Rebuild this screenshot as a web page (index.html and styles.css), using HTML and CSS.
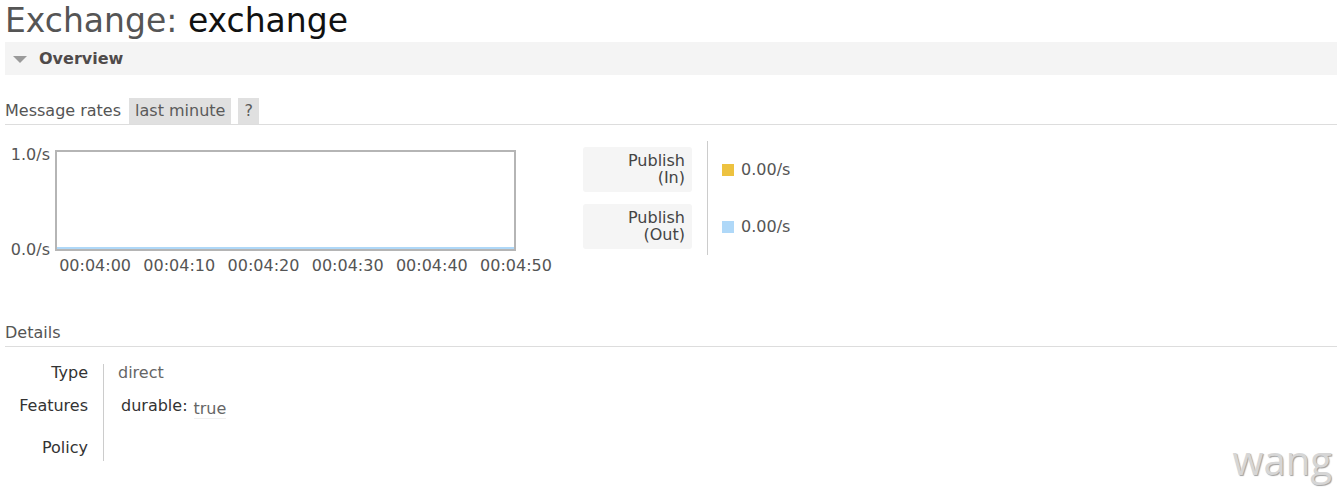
FILE: index.html
```html
<!DOCTYPE html>
<html>
<head>
<meta charset="utf-8">
<title>Exchange: exchange</title>
<link rel="stylesheet" href="styles.css">
</head>
<body>
<h1 class="page-title"><span class="title-kind">Exchange:</span> <b class="title-name">exchange</b></h1>

<div class="section">
  <h2 class="section-head"><span class="tri"></span>Overview</h2>
  <div class="section-body">
    <h3 class="sub-head">
      <span class="sub-title">Message rates</span>
      <span class="pill">last minute</span>
      <span class="pill">?</span>
    </h3>

    <div class="chart-row">
      <div class="chart">
        <span class="ytick ytick-top">1.0/s</span>
        <span class="ytick ytick-bottom">0.0/s</span>
        <div class="plot"><div class="series-line"></div></div>
        <div class="xaxis">
          <span class="xtick">00:04:00</span>
          <span class="xtick">00:04:10</span>
          <span class="xtick">00:04:20</span>
          <span class="xtick">00:04:30</span>
          <span class="xtick">00:04:40</span>
          <span class="xtick">00:04:50</span>
        </div>
      </div>

      <div class="legend">
        <div class="legend-labels">
          <div class="legend-label">Publish<br>(In)</div>
          <div class="legend-label">Publish<br>(Out)</div>
        </div>
        <div class="legend-values">
          <div class="legend-value"><span class="swatch swatch-in"></span>0.00/s</div>
          <div class="legend-value"><span class="swatch swatch-out"></span>0.00/s</div>
        </div>
      </div>
    </div>

    <h3 class="details-head">Details</h3>
    <div class="facts">
      <div class="fact-key row-type">Type</div>
      <div class="fact-val row-type">direct</div>
      <div class="fact-key row-features">Features</div>
      <div class="fact-val row-features"><span class="feat-key">durable:</span><span class="feat-val">true</span></div>
      <div class="fact-key row-policy">Policy</div>
      <div class="fact-val row-policy"></div>
    </div>
  </div>
</div>

<div class="watermark">wang</div>
</body>
</html>
```

FILE: styles.css
```css
html, body {
  margin: 0;
  padding: 0;
  background: #fff;
}

body {
  font-family: "DejaVu Sans", Verdana, sans-serif;
  font-size: 16px;
  color: #555;
  position: relative;
  height: 491px;
  overflow: hidden;
}

.page-title {
  margin: 0;
  padding-left: 5px;
  font-size: 33px;
  font-weight: normal;
  line-height: 42px;
  height: 42px;
}

.title-kind {
  color: #555;
}

.title-name {
  font-weight: normal;
  color: #111;
}

.section {
  margin-left: 5px;
}

.section-head {
  margin: 0;
  height: 33px;
  background: #f4f4f4;
  display: flex;
  align-items: center;
  padding-left: 8px;
  font-size: 16px;
  font-weight: bold;
  color: #4f4a4a;
}

.tri {
  width: 0;
  height: 0;
  border-left: 7px solid transparent;
  border-right: 7px solid transparent;
  border-top: 7px solid #9a9a9a;
  margin-right: 12px;
  margin-top: 2px;
}

.sub-head {
  margin: 23px 0 0 0;
  display: flex;
  height: 26px;
  border-bottom: 1px solid #ddd;
  font-size: 16px;
  font-weight: normal;
  line-height: 26px;
  color: #555;
}

.sub-title {
  margin-right: 8px;
}

.pill {
  background: #e0e0e0;
  padding: 0 6px;
  margin-right: 7px;
  color: #5a5a5a;
}

.chart-row {
  display: flex;
  align-items: flex-start;
  margin-top: 16px;
}

.chart {
  position: relative;
  width: 555px;
  height: 140px;
  padding: 9px 0 0 50px;
  box-sizing: border-box;
}

.plot {
  position: relative;
  width: 461px;
  height: 101px;
  border: 2px solid #b5b5b5;
  box-sizing: border-box;
  background: #fff;
}

.series-line {
  position: absolute;
  left: 0;
  right: 0;
  bottom: 0;
  height: 2px;
  background: #afd8f8;
}

.ytick {
  position: absolute;
  right: 510px;
  line-height: 18px;
  color: #555;
}

.ytick-top {
  top: 5px;
}

.ytick-bottom {
  top: 100px;
}

.xaxis {
  position: absolute;
  left: 48px;
  top: 116px;
  display: flex;
  line-height: 18px;
}

.xtick {
  width: 84.2px;
  text-align: center;
  white-space: nowrap;
  color: #555;
}

.legend {
  display: flex;
  margin-left: 23px;
}

.legend-labels {
  display: flex;
  flex-direction: column;
  gap: 12px;
  padding: 6px 0;
  margin-right: 15px;
}

.legend-label {
  width: 109px;
  height: 45px;
  box-sizing: border-box;
  background: #f5f5f5;
  border-radius: 3px;
  text-align: right;
  padding: 5px 7px 0 0;
  line-height: 17px;
  color: #444;
}

.legend-values {
  border-left: 1px solid #ccc;
  padding: 6px 0 6px 14px;
  display: flex;
  flex-direction: column;
  gap: 12px;
}

.legend-value {
  height: 45px;
  display: flex;
  align-items: center;
  color: #555;
}

.swatch {
  width: 12px;
  height: 12px;
  margin-right: 7px;
  margin-top: 1px;
}

.swatch-in {
  background: #edc240;
}

.swatch-out {
  background: #afd8f8;
}

.details-head {
  margin: 42px 0 0 0;
  font-size: 16px;
  font-weight: normal;
  line-height: 20px;
  padding-bottom: 3px;
  border-bottom: 1px solid #ddd;
  color: #555;
}

.facts {
  display: grid;
  grid-template-columns: 99px auto;
  margin-top: 17px;
  line-height: 18px;
}

.fact-key {
  text-align: right;
  padding-right: 15px;
  border-right: 1px solid #ccc;
  color: #333;
}

.fact-val {
  padding-left: 14px;
  color: #666;
}

.row-type {
  height: 33px;
}

.row-features {
  height: 42px;
}

.row-policy {
  height: 22px;
}

.feat-key {
  color: #333;
  margin-left: 3px;
  margin-right: 6px;
}

.feat-val {
  display: inline-block;
  position: relative;
  top: 3px;
  color: #666;
  border-bottom: 1px solid #f0f0f0;
}

.watermark {
  position: absolute;
  right: 5px;
  bottom: 10px;
  font-family: "Open Sans", "Noto Sans", sans-serif;
  font-weight: 400;
  font-size: 40px;
  line-height: 42px;
  color: #d6d6d6;
  text-shadow: 1px 1px 1px #a0a0a0;
}
```
